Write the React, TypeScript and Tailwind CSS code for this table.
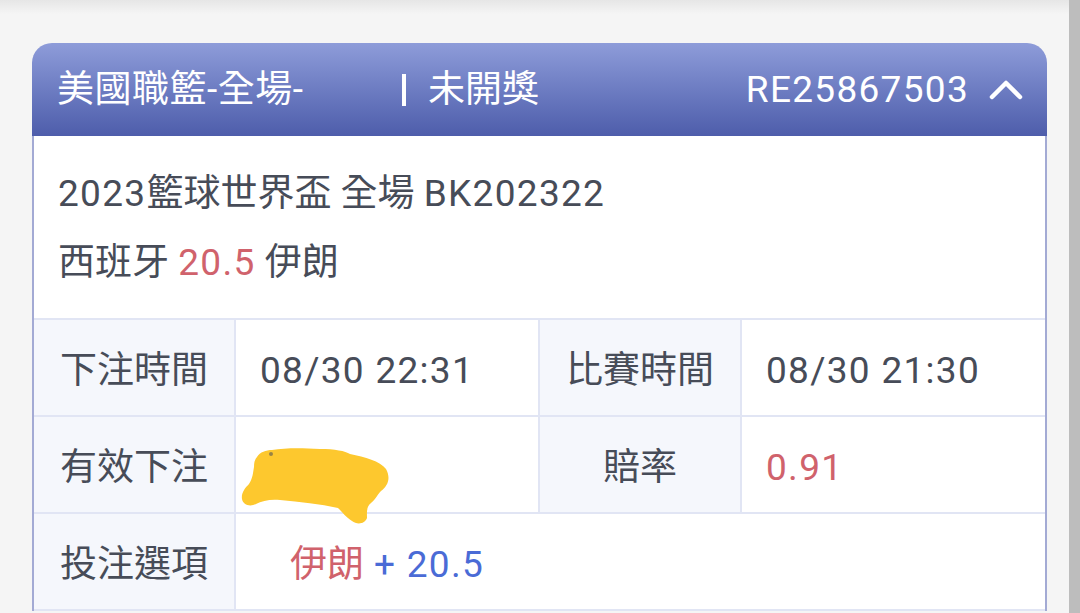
const font = { fontFamily: "Roboto, 'Noto Sans CJK TC', sans-serif" };

const Num = ({ children, className = '' }: { children: React.ReactNode; className?: string }) => (
  <span className={`tracking-[1.3px] ${className}`}>{children}</span>
);

const Blob = () => (
  <svg
    className="absolute left-[208px] top-[402px] w-[152px] h-[82px] pointer-events-none"
    viewBox="240 445 152 82"
  >
    <path
      d="M257 457 C260 452 266 450 272 450 C285 448 300 448 320 449 C335 449 345 451 350 454 C365 457 380 461 386 469 C391 478 388 486 381 491 C377 495 376 499 371 503 C366 507 367 513 367 518 C365 524 357 525 352 521 C346 517 343 513 338 508 C320 504 300 502 280 500 C270 499 262 501 256 504 C250 507 243 505 242 499 C241 493 245 488 249 484 C253 478 253 472 254 467 C254 462 255 459 257 457 Z"
      fill="#fdc82e"
    />
    <circle cx="271" cy="454" r="2" fill="#555" opacity="0.6" />
  </svg>
);

const Label = ({ children }: { children: React.ReactNode }) => (
  <div className="w-[202px] shrink-0 flex items-center justify-center pt-[6px] bg-[#f5f7fc] border-r-2 border-[#e1e5f4]">
    {children}
  </div>
);

export default function App() {
  return (
    <div className="w-[1080px] h-[613px] overflow-hidden bg-[#f5f5f5] flex" style={font}>
      <div className="flex-1 relative">
        <div className="absolute inset-x-0 top-0 h-[14px] bg-gradient-to-b from-[#e6e6e6] to-[#f5f5f5]" />
        <div className="relative ml-[32px] mt-[43px] w-[1015px] text-[37px] text-[#474c58]">
          {/* Header */}
          <div className="h-[93px] rounded-t-[20px] bg-gradient-to-b from-[#8e9cd9] to-[#4e5dab] flex items-center text-white pl-[25px] pr-[24px]">
            <span className="w-[345px] tracking-[0.5px]">美國職籃-全場-</span>
            <span className="w-[4px] h-[32px] bg-white" />
            <span className="ml-[22px]">未開獎</span>
            <Num className="ml-auto">RE25867503</Num>
            <svg className="ml-[20px] w-[34px] h-[20px]" viewBox="0 0 34 20" fill="none">
              <polyline points="3,17 17,3 31,17" stroke="white" strokeWidth="4.5" strokeLinecap="round" strokeLinejoin="round" />
            </svg>
          </div>

          <div className="border-x-2 border-[#a3aad4] bg-white">
            {/* Match info */}
            <div className="pl-[24px] pt-[23px] pb-[21px] leading-[69px]">
              <div>
                <Num>2023</Num>籃球世界盃 全場 <Num>BK202322</Num>
              </div>
              <div>
                西班牙 <Num className="text-[#d0626c]">20.5</Num> 伊朗
              </div>
            </div>

            {/* Details table */}
            <div className="border-t-2 border-[#e1e5f4]">
              <div className="flex h-[97px] border-b-2 border-[#e1e5f4]">
                <Label>下注時間</Label>
                <div className="w-[304px] flex items-center pt-[6px] pl-[24px] border-r-2 border-[#e1e5f4]">
                  <Num>08/30 22:31</Num>
                </div>
                <Label>比賽時間</Label>
                <div className="flex-1 flex items-center pt-[6px] pl-[24px]">
                  <Num>08/30 21:30</Num>
                </div>
              </div>
              <div className="flex h-[97px] border-b-2 border-[#e1e5f4]">
                <Label>有效下注</Label>
                <div className="w-[304px] border-r-2 border-[#e1e5f4]" />
                <Label>賠率</Label>
                <div className="flex-1 flex items-center pt-[6px] pl-[24px]">
                  <Num className="text-[#d0626c]">0.91</Num>
                </div>
              </div>
              <div className="flex h-[97px] border-b-2 border-[#e1e5f4]">
                <Label>投注選項</Label>
                <div className="flex-1 flex items-center pt-[6px] pl-[54px]">
                  <span className="text-[#d0626c]">伊朗</span>
                  <Num className="ml-[10px] text-[#4a6bd6]">+ 20.5</Num>
                </div>
              </div>
            </div>
          </div>
          <Blob />
        </div>
      </div>
      <div className="w-[11px] bg-[#bdbdbd]" />
    </div>
  );
}
